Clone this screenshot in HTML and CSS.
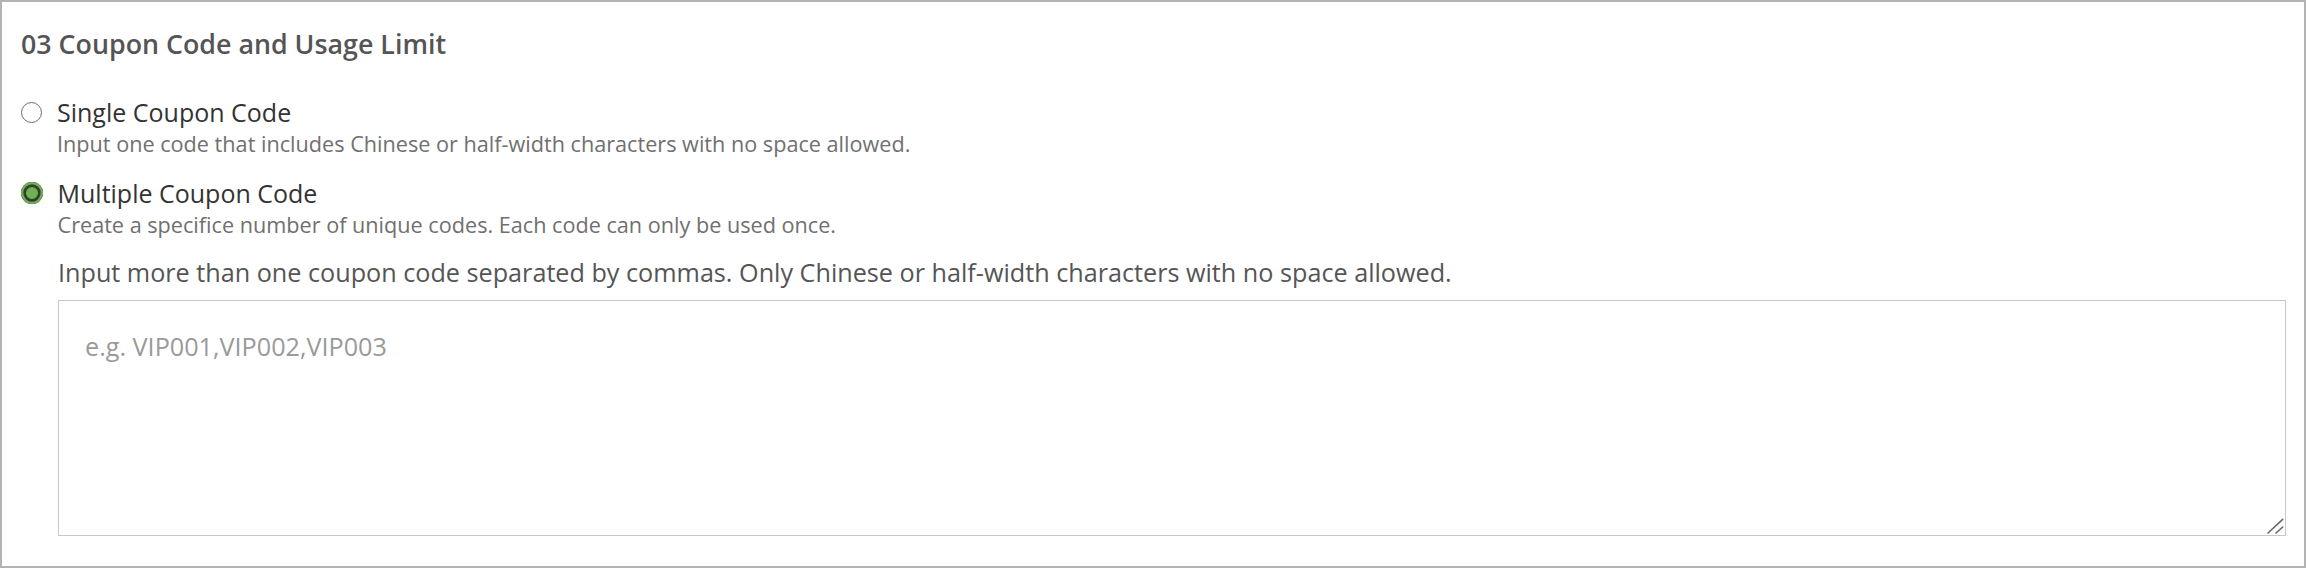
FILE: index.html
```html
<!DOCTYPE html>
<html lang="en">
<head>
<meta charset="utf-8">
<title>Coupon Code and Usage Limit</title>
<link rel="stylesheet" href="styles.css">
</head>
<body>
<section class="card">
  <h2 class="title">03 Coupon Code and Usage Limit</h2>
  <div class="options">
    <label class="option">
      <input class="radio" type="radio" name="mode" value="single">
      <span class="option-text">
        <span class="option-label">Single Coupon Code</span>
        <span class="option-desc">Input one code that includes Chinese or half-width characters with no space allowed.</span>
      </span>
    </label>
    <label class="option">
      <input class="radio" type="radio" name="mode" value="multiple" checked>
      <span class="option-text">
        <span class="option-label">Multiple Coupon Code</span>
        <span class="option-desc">Create a specifice number of unique codes. Each code can only be used once.</span>
      </span>
    </label>
  </div>
  <div class="codes">
    <p class="codes-label">Input more than one coupon code separated by commas. Only Chinese or half-width characters with no space allowed.</p>
    <div class="codes-field">
      <textarea class="codes-input" placeholder="e.g. VIP001,VIP002,VIP003"></textarea>
      <svg class="grip" width="20" height="20" viewBox="0 0 20 20" aria-hidden="true">
        <line x1="3" y1="18" x2="17.7" y2="4.3" stroke="#666" stroke-width="1.6" stroke-linecap="round"/>
        <line x1="11" y1="18" x2="17.7" y2="12" stroke="#666" stroke-width="1.6" stroke-linecap="round"/>
      </svg>
    </div>
  </div>
</section>
</body>
</html>
```

FILE: styles.css
```css
html, body {
  margin: 0;
  padding: 0;
  background: #ffffff;
}

body {
  font-family: "Open Sans", "Noto Sans", sans-serif;
}

.card {
  box-sizing: border-box;
  width: 2306px;
  height: 568px;
  border: 2px solid #b3b3b3;
  padding: 24px 18px 0 19px;
}

.title {
  margin: 0;
  font-size: 26.8px;
  line-height: 36px;
  font-weight: 600;
  color: #555555;
}

.options {
  display: flex;
  flex-direction: column;
  gap: 18px;
  margin-top: 32px;
}

.option {
  display: flex;
  align-items: flex-start;
  gap: 15px;
  cursor: pointer;
}

.radio {
  appearance: none;
  -webkit-appearance: none;
  box-sizing: border-box;
  flex: none;
  width: 21px;
  height: 21px;
  margin: 8px 0 0 0;
  border-radius: 50%;
  border: 1.6px solid #6e6e6e;
  background: #ffffff;
}

.radio:checked {
  width: 22px;
  height: 22px;
  margin: 7px 0 0 -0.5px;
  border: none;
  background: #6cb24f;
  box-shadow: inset 0 0 0 2.3px #6cb24f, inset 0 0 0 5px #3a3a3a;
}

.option-text {
  display: flex;
  flex-direction: column;
}

.option-label {
  font-size: 25px;
  line-height: 36px;
  color: #333333;
}

.option-desc {
  margin-top: 1px;
  font-size: 21.65px;
  line-height: 26px;
  color: #707070;
}

.codes {
  padding-left: 37px;
  margin-top: 17px;
}

.codes-label {
  margin: 0;
  font-size: 25.2px;
  line-height: 34px;
  color: #555555;
}

.codes-field {
  position: relative;
  margin-top: 11px;
}

.codes-input {
  display: block;
  box-sizing: border-box;
  width: 100%;
  height: 236px;
  margin: 0;
  border: 1px solid #c8c8c8;
  border-radius: 0;
  padding: 28px 26px 20px;
  font-family: "Open Sans", "Noto Sans", sans-serif;
  font-size: 25.2px;
  line-height: 35px;
  color: #333333;
  outline: none;
  resize: none;
}

.codes-input::placeholder {
  color: #9a9a9a;
}

.grip {
  position: absolute;
  right: 1px;
  bottom: 1px;
  pointer-events: none;
}
```
